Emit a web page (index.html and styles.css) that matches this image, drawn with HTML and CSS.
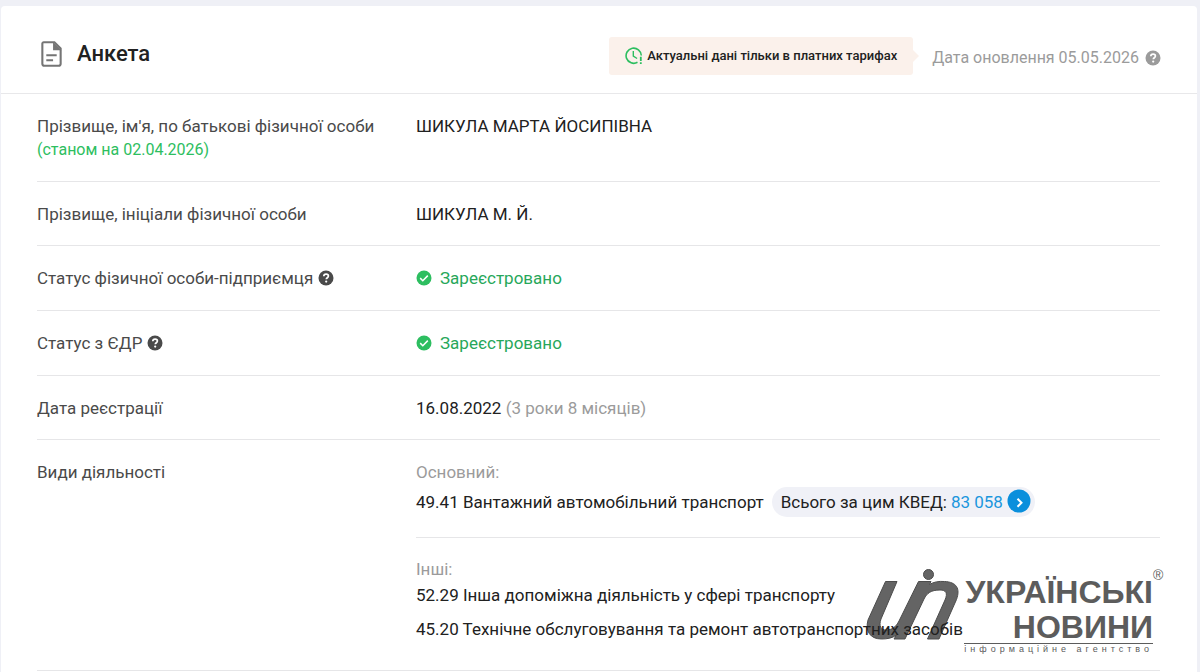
FILE: index.html
```html
<!DOCTYPE html>
<html lang="uk">
<head>
  <meta charset="UTF-8">
  <meta name="viewport" content="width=device-width, initial-scale=1">
  <title>Анкета</title>
  <link rel="stylesheet" href="styles.css">
</head>
<body>

  <svg class="sprite">
    <symbol id="help" viewBox="0 0 16 16">
      <circle cx="8" cy="8" r="7.5" fill="currentColor"/>
      <path d="M5.8 6.3C5.8 4.9 6.8 4.1 8.1 4.1s2.3.8 2.3 2c0 1.6-2.1 1.7-2.1 3.2" fill="none" stroke="#fff" stroke-width="1.7"/>
      <circle cx="8.2" cy="11.6" r="1.1" fill="#fff"/>
    </symbol>
    <symbol id="check" viewBox="0 0 16 16">
      <circle cx="8" cy="8" r="7.5" fill="#2dbe60"/>
      <path d="M4.2 8.1l2.6 2.6 5-5.1" fill="none" stroke="#fff" stroke-width="1.5"/>
    </symbol>
  </svg>

  <main class="card">
    <header class="card-header">
      <svg class="doc-icon" viewBox="0 0 20 25">
        <path d="M2.5 1.2h10.3l6 6v14.6a2 2 0 0 1-2 2H3.2a2 2 0 0 1-2-2V2.5a1.3 1.3 0 0 1 1.3-1.3z" fill="none" stroke="#757575" stroke-width="2"/>
        <path d="M11.500 1l8 8h-8z" fill="#757575"/>
        <path d="M5 13.700h10M5 18.500h6.500" stroke="#757575" stroke-width="1.800"/>
      </svg>
      <h1>Анкета</h1>
      <div class="notice">
        <svg class="clock-icon" viewBox="0 0 18 18">
          <path d="M16.300 8.500A7.600 7.600 0 1 0 12.500 15.300" fill="none" stroke="#2dbe60" stroke-width="1.600"/>
          <path d="M8.300 4v5.200l3.800 2.300" fill="none" stroke="#2dbe60" stroke-width="1.400"/>
          <path d="M15.800 9.800v4.200M15.800 15.300v1.700" stroke="#2dbe60" stroke-width="1.800"/>
        </svg>
        <strong>Актуальні дані тільки в платних тарифах</strong>
      </div>
      <div class="updated">
        Дата оновлення 05.05.2026
        <button class="help" type="button"><svg><use href="#help"/></svg></button>
      </div>
    </header>

    <dl class="details">
      <div class="row">
        <dt>Прізвище, ім'я, по батькові фізичної особи <small>(станом на 02.04.2026)</small></dt>
        <dd>ШИКУЛА МАРТА ЙОСИПІВНА</dd>
      </div>
      <div class="row">
        <dt>Прізвище, ініціали фізичної особи</dt>
        <dd>ШИКУЛА М. Й.</dd>
      </div>
      <div class="row status">
        <dt>Статус фізичної особи-підприємця <button class="help" type="button"><svg><use href="#help"/></svg></button></dt>
        <dd><svg class="check"><use href="#check"/></svg>Зареєстровано</dd>
      </div>
      <div class="row status">
        <dt>Статус з ЄДР <button class="help" type="button"><svg><use href="#help"/></svg></button></dt>
        <dd><svg class="check"><use href="#check"/></svg>Зареєстровано</dd>
      </div>
      <div class="row">
        <dt>Дата реєстрації</dt>
        <dd>16.08.2022 <span class="muted">(3 роки 8 місяців)</span></dd>
      </div>
      <div class="row">
        <dt>Види діяльності</dt>
        <dd>
          <div class="main-activity">
            <div class="muted">Основний:</div>
            <div class="activity">
              49.41 Вантажний автомобільний транспорт
              <a class="pill" href="#">Всього за цим КВЕД: <span class="count">83 058</span>
                <svg viewBox="0 0 24 24">
                  <circle cx="12" cy="12" r="11.500" fill="#0a8fdc"/>
                  <path d="M10.500 9.800l4 4-4 4" fill="none" stroke="#fff" stroke-width="2"/>
                </svg>
              </a>
            </div>
          </div>
          <div class="muted">Інші:</div>
          <ul>
            <li>52.29 Інша допоміжна діяльність у сфері транспорту</li>
            <li>45.20 Технічне обслуговування та ремонт автотранспортних засобів</li>
          </ul>
        </dd>
      </div>
    </dl>

    <!-- agency watermark -->
    <div class="watermark">
      <svg viewBox="0 0 94 72">
        <g fill="#646464" stroke="#4c4c4c" stroke-width="1">
          <circle cx="62.500" cy="5.500" r="5"/>
          <path d="M19.500 12.500H31L15 50c-2.500 7 0 11 5 11 6 0 10-3 13-9L52.500 12.500H65l-1.500 3c4-2.500 9-3.500 15-3 12 .5 16 7 12 18L73 70H61.500L79 31c3-7 1-10-5-10-9 0-13 3-16 9L39 70H28l2.500-4c-4 3-9 4-15 4C4 70-1 62 2 51z"/>
        </g>
      </svg>
      <div class="brand">
        <div class="brand-name">УКРАЇНСЬКІ<sup>®</sup></div>
        <div class="brand-name">НОВИНИ</div>
        <div class="tagline">інформаційне агентство</div>
      </div>
    </div>
  </main>

</body>
</html>
```
FILE: styles.css
```css
* {
  box-sizing: border-box;
}
body {
  margin: 0;
  padding: 6px 3px 0 1px;
  background: #eff0f6;
  font-family: Roboto, "Open Sans", sans-serif;
  font-size: 17px;
  line-height: 24px;
  color: #212121;
}
.sprite {
  display: none;
}
.card {
  position: relative;
  padding-bottom: 1px;
  background: #fff;
  border-radius: 4px 4px 0 0;
}
.card-header {
  display: flex;
  align-items: center;
  height: 88px;
  padding: 12px 36px 0 40px;
  border-bottom: 1px solid #e8e8ea;
}
.doc-icon {
  width: 21px;
  height: 26px;
  margin-bottom: 4px;
}
h1 {
  margin: 0 auto 3px 15px;
  font-size: 22px;
  font-weight: 500;
}
.notice {
  position: relative;
  display: flex;
  align-items: center;
  gap: 4px;
  height: 38px;
  padding: 0 16px;
  margin-right: 19px;
  background: #fbf1eb;
  border-radius: 3px;
  font-size: 13px;
}
.notice strong {
  font-weight: 500;
}
.notice::after {
  content: "";
  position: absolute;
  left: 100%;
  top: 13px;
  border: 6px solid transparent;
  border-left-color: #fbf1eb;
  border-right: 0;
}
.clock-icon {
  width: 18px;
  height: 18px;
}
.updated {
  display: flex;
  align-items: center;
  gap: 6px;
  padding-top: 5px;
  font-size: 16px;
  color: #9b9b9b;
}
.help {
  display: inline-block;
  padding: 0;
  border: 0;
  background: none;
  color: inherit;
  line-height: 0;
  cursor: pointer;
}
.help svg,
.check {
  width: 16px;
  height: 16px;
}
.details {
  position: relative;
  z-index: 1;
  margin: 0;
  padding: 0 37px 0 36px;
}
.row {
  display: grid;
  grid-template-columns: 379px 1fr;
  padding: 20px 0 19px;
  border-bottom: 1px solid #e6e6e8;
}
.status {
  padding: 20px 0;
}
dt {
  color: #4a4a4a;
}
dt small {
  display: block;
  font-size: 16px;
  color: #2dbe60;
}
dt .help {
  vertical-align: -2px;
}
dd {
  margin: 0;
}
.status dd {
  display: flex;
  align-items: center;
  gap: 8px;
  color: #27a75a;
}
.muted {
  color: #9b9b9b;
}
.main-activity {
  padding-bottom: 20px;
  margin-bottom: 19px;
  border-bottom: 1px solid #e6e6e8;
}
.activity {
  display: flex;
  align-items: center;
  gap: 8px;
  padding-top: 3px;
}
.pill {
  display: flex;
  align-items: center;
  gap: 4px;
  height: 30px;
  padding: 0 4px 0 9px;
  border-radius: 15px;
  background: #f0f1f7;
  color: #212121;
  text-decoration: none;
}
.pill .count {
  color: #1a96dd;
}
.pill svg {
  width: 24px;
  height: 24px;
  margin-bottom: 2px;
}
ul {
  display: grid;
  gap: 10px;
  margin: 0;
  padding: 2px 0 10px;
  list-style: none;
}
.watermark {
  position: absolute;
  right: 44px;
  bottom: 18px;
  display: flex;
  align-items: flex-start;
  gap: 4px;
  color: #5c5c5c;
  font-family: "Liberation Sans", Arial, sans-serif;
}
.watermark svg {
  width: 94px;
  height: 72px;
}
.brand {
  padding-top: 6px;
  text-align: right;
}
.brand-name {
  position: relative;
  font-size: 32px;
  font-weight: bold;
  line-height: 35px;
}
.brand-name sup {
  position: absolute;
  left: 100%;
  top: -7px;
  font-size: 14px;
  font-weight: normal;
  line-height: 14px;
}
.tagline {
  margin-top: -2px;
  border-top: 1px solid #5c5c5c;
  font-size: 9px;
  line-height: 10px;
  letter-spacing: 4px;
  white-space: nowrap;
}
```
